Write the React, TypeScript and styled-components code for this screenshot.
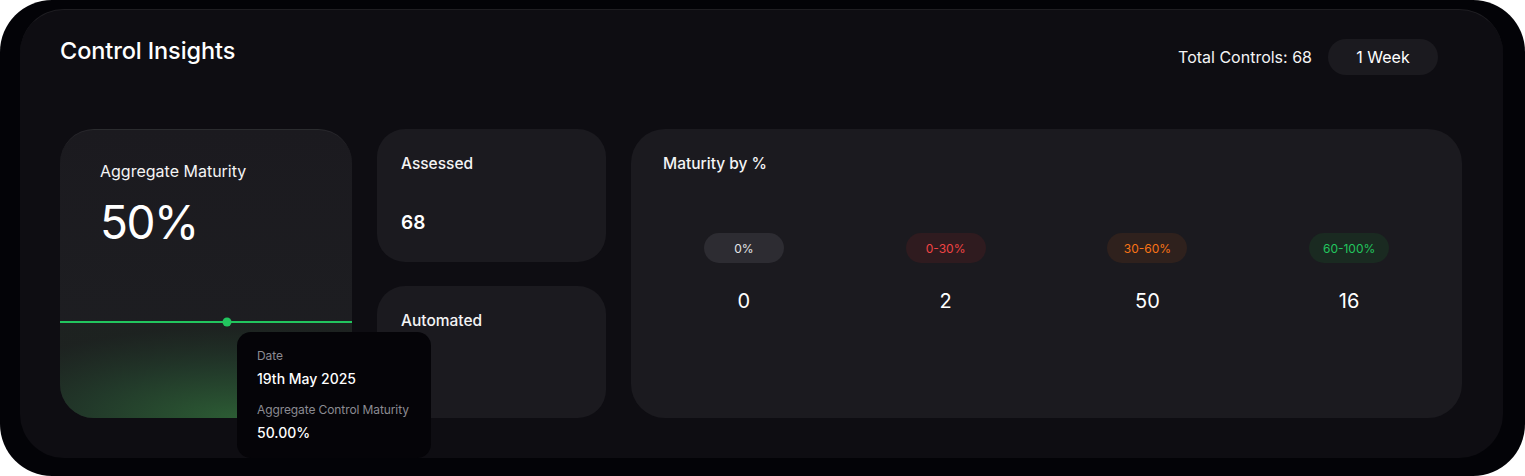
import React from 'react';
import styled, { createGlobalStyle } from 'styled-components';

const GlobalStyle = createGlobalStyle`
  html, body {
    margin: 0;
    padding: 0;
    background: #ffffff;
  }
  body {
    font-family: Inter, 'Noto Sans', sans-serif;
    -webkit-font-smoothing: antialiased;
  }
`;

type Bucket = {
  label: string;
  value: number;
  tone: 'neutral' | 'red' | 'orange' | 'green';
};

const buckets: Bucket[] = [
  { label: '0%', value: 0, tone: 'neutral' },
  { label: '0-30%', value: 2, tone: 'red' },
  { label: '30-60%', value: 50, tone: 'orange' },
  { label: '60-100%', value: 16, tone: 'green' },
];

const TONES = {
  neutral: { bg: '#2d2c32', fg: '#e4e4e7' },
  red: { bg: '#2f1b1f', fg: '#ef4444' },
  orange: { bg: '#2f211d', fg: '#f97316' },
  green: { bg: '#1a2a21', fg: '#22c55e' },
};

const App = () => {
  return (
    <>
      <GlobalStyle />
      <Frame>
        <Panel>
          <Header>
            <Title>Control Insights</Title>
            <HeaderRight>
              <TotalText>Total Controls: 68</TotalText>
              <RangeButton>1 Week</RangeButton>
            </HeaderRight>
          </Header>

          <CardsRow>
            <AggregateWrapper>
              <AggregateCard>
                <CardLabel>Aggregate Maturity</CardLabel>
                <BigValue>50%</BigValue>
                <Chart viewBox="0 0 292 105" preserveAspectRatio="none">
                  <defs>
                    <radialGradient id="areaGlow" cx="0.6" cy="1" r="0.95">
                      <stop offset="0%" stopColor="#2c5c34" stopOpacity="1" />
                      <stop offset="55%" stopColor="#223a2a" stopOpacity="0.95" />
                      <stop offset="100%" stopColor="#1d2420" stopOpacity="0.7" />
                    </radialGradient>
                  </defs>
                  <rect x="0" y="9" width="292" height="96" fill="url(#areaGlow)" />
                  <line x1="0" y1="9" x2="292" y2="9" stroke="#22c55e" strokeWidth="2" />
                  <circle cx="167" cy="9" r="4.5" fill="#22c55e" />
                </Chart>
              </AggregateCard>
              <Tooltip>
                <TipLabel>Date</TipLabel>
                <TipValue>19th May 2025</TipValue>
                <TipLabel>Aggregate Control Maturity</TipLabel>
                <TipValue>50.00%</TipValue>
              </Tooltip>
            </AggregateWrapper>

            <StatColumn>
              <StatCard>
                <StatLabel>Assessed</StatLabel>
                <StatValue>68</StatValue>
              </StatCard>
              <StatCard>
                <StatLabel>Automated</StatLabel>
              </StatCard>
            </StatColumn>

            <MaturityCard>
              <StatLabel>Maturity by %</StatLabel>
              <BucketGrid>
                {buckets.map((b) => (
                  <BucketCell key={b.label}>
                    <Pill $tone={b.tone}>{b.label}</Pill>
                    <BucketValue>{b.value}</BucketValue>
                  </BucketCell>
                ))}
              </BucketGrid>
            </MaturityCard>
          </CardsRow>
        </Panel>
      </Frame>
    </>
  );
};

const Frame = styled.div`
  width: 1525px;
  height: 476px;
  box-sizing: border-box;
  background: #030307;
  border-radius: 52px;
  padding: 9px 22px 18px 20px;
`;

const Panel = styled.div`
  height: 100%;
  box-sizing: border-box;
  background: #0e0d12;
  border-radius: 44px;
  border-top: 1px solid rgba(255, 255, 255, 0.07);
  padding: 26px 41px 40px 40px;
  display: flex;
  flex-direction: column;
  gap: 54px;
`;

const Header = styled.div`
  display: flex;
  justify-content: space-between;
  align-items: flex-start;
`;

const Title = styled.h1`
  margin: 0;
  font-size: 23.5px;
  line-height: 30px;
  font-weight: 500;
  color: #ffffff;
  letter-spacing: -0.1px;
`;

const HeaderRight = styled.div`
  display: flex;
  align-items: center;
  gap: 16px;
  margin-top: 3px;
  margin-right: 24px;
`;

const TotalText = styled.span`
  font-size: 16px;
  color: #f4f4f5;
`;

const RangeButton = styled.button`
  height: 36px;
  width: 110px;
  border: none;
  border-radius: 18px;
  background: #1b1a1f;
  color: #ffffff;
  font-family: inherit;
  font-size: 16px;
  cursor: pointer;
`;

const CardsRow = styled.div`
  flex: 1;
  display: grid;
  grid-template-columns: 292px 229px 1fr;
  gap: 25px;
`;

const AggregateWrapper = styled.div`
  position: relative;
`;

const AggregateCard = styled.div`
  height: 100%;
  box-sizing: border-box;
  border-radius: 34px;
  overflow: hidden;
  background: linear-gradient(180deg, #1b1a1f 0%, #1e1f22 100%);
  border-top: 1px solid rgba(255, 255, 255, 0.06);
  padding: 30px 40px 0;
  display: flex;
  flex-direction: column;
`;

const CardLabel = styled.div`
  font-size: 16px;
  line-height: 22px;
  color: #f4f4f5;
`;

const BigValue = styled.div`
  margin-top: 12px;
  font-size: 46px;
  line-height: 56px;
  font-weight: 400;
  letter-spacing: -1.5px;
  color: #ffffff;
`;

const Chart = styled.svg`
  display: block;
  margin: auto -40px 0;
  width: calc(100% + 80px);
  height: 105px;
`;

const Tooltip = styled.div`
  position: absolute;
  left: 177px;
  top: 203px;
  width: 194px;
  box-sizing: border-box;
  padding: 16px 20px 16px;
  border-radius: 14px;
  background: #050408;
  display: flex;
  flex-direction: column;
  z-index: 2;
`;

const TipLabel = styled.div`
  font-size: 12px;
  line-height: 16px;
  color: #8b8b92;
  margin-top: 14px;
  white-space: nowrap;
  letter-spacing: -0.1px;

  &:first-child {
    margin-top: 0;
  }
`;

const TipValue = styled.div`
  font-size: 14px;
  line-height: 18px;
  margin-top: 6px;
  color: #ffffff;
  font-weight: 500;
`;

const StatColumn = styled.div`
  display: grid;
  grid-template-rows: 1fr 1fr;
  gap: 24px;
`;

const StatCard = styled.div`
  box-sizing: border-box;
  border-radius: 28px;
  background: #1b1a1f;
  padding: 24px 24px;
  display: flex;
  flex-direction: column;
  gap: 36px;
`;

const StatLabel = styled.div`
  font-size: 15.5px;
  line-height: 22px;
  color: #f4f4f5;
  font-weight: 500;
`;

const StatValue = styled.div`
  font-size: 19px;
  line-height: 24px;
  font-weight: 600;
  color: #ffffff;
`;

const MaturityCard = styled.div`
  box-sizing: border-box;
  border-radius: 34px;
  background: #1b1a1f;
  padding: 24px 32px;
  display: flex;
  flex-direction: column;
`;

const BucketGrid = styled.div`
  display: grid;
  grid-template-columns: repeat(4, 1fr);
  margin: 58px -20px 0;
`;

const BucketCell = styled.div`
  display: flex;
  flex-direction: column;
  align-items: center;
  gap: 26px;
`;

const Pill = styled.span<{ $tone: Bucket['tone'] }>`
  width: 80px;
  height: 30px;
  border-radius: 15px;
  display: flex;
  align-items: center;
  justify-content: center;
  font-size: 12px;
  background: ${(p) => TONES[p.$tone].bg};
  color: ${(p) => TONES[p.$tone].fg};
`;

const BucketValue = styled.span`
  font-size: 20px;
  line-height: 24px;
  color: #ffffff;
`;

export default App;
